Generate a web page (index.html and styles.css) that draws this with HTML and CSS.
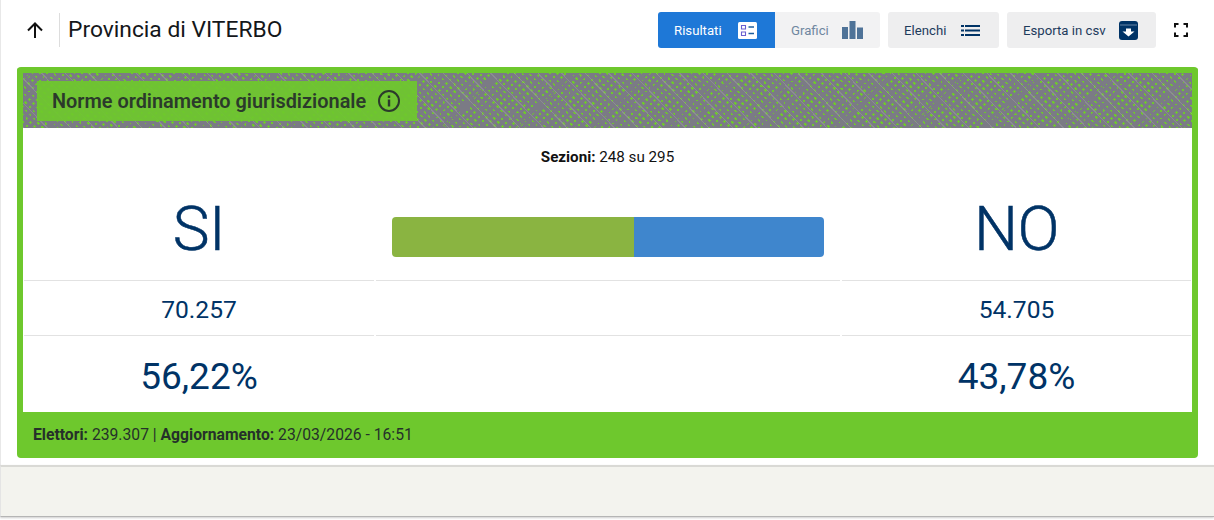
FILE: index.html
```html
<!DOCTYPE html>
<html lang="it">
<head>
<meta charset="utf-8">
<title>Provincia di VITERBO</title>
<link rel="stylesheet" href="styles.css">
</head>
<body>
<main class="panel">
  <header class="topbar">
    <div class="heading">
      <button class="back" aria-label="Indietro">
        <svg width="16" height="16" viewBox="0 0 16 16"><path d="M8 16V1.500M1 8.500l7-7 7 7" fill="none" stroke="#111" stroke-width="2"/></svg>
      </button>
      <h1 class="title">Provincia di VITERBO</h1>
    </div>
    <nav class="actions">
      <div class="group">
        <a class="btn btn-active seg-w1">Risultati
          <svg class="ico" width="19" height="17" viewBox="0 0 19 17"><rect width="19" height="17" rx="1.500" fill="#fff"/><path d="M3.500 3.500h4v3.500h-4zM3.500 10h4v3.500h-4z" fill="none" stroke="#6a5fd0" stroke-width="1.100"/><path d="M10.500 5h5.500M10.500 11.500h5.500" stroke="#1f5f9f" stroke-width="1.600"/></svg>
        </a>
        <a class="btn btn-muted seg-w2">Grafici
          <svg class="ico" width="21" height="18" viewBox="0 0 21 18"><path d="M0 6h6v12H0zM7.500 0h6v18h-6zM15 6.500h6V18h-6z" fill="#4f7398"/></svg>
        </a>
      </div>
      <a class="btn btn-grey seg-w3">Elenchi
        <svg class="ico" width="19" height="11" viewBox="0 0 19 11"><path d="M0 0h3v2H0zM0 4.500h3v2H0zM0 9h3v2H0zM4 0h15v2H4zM4 4.500h15v2H4zM4 9h15v2H4z" fill="#003366"/></svg>
      </a>
      <a class="btn btn-grey seg-w4">Esporta in csv
        <svg class="ico" width="19" height="19" viewBox="0 0 19 19"><path d="M3 0h13a3 3 0 0 1 3 3v13a3 3 0 0 1-3 3H3a3 3 0 0 1-3-3V3a3 3 0 0 1 3-3z" fill="#003366"/><path d="M1 4h17" stroke="#8fa6c0" stroke-width=".7"/><path d="M7 7.500h5v3h3.500l-6 5-6-5H7z" fill="#fff"/></svg>
      </a>
      <button class="full" aria-label="Schermo intero">
        <svg width="14" height="14" viewBox="0 0 14 14"><path d="M1 4.500V1h3.500M9.500 1H13v3.500M13 9.500V13H9.500M4.500 13H1V9.500" fill="none" stroke="#111" stroke-width="2"/></svg>
      </button>
    </nav>
  </header>

  <section class="card">
    <div class="hatch">
      <div class="badge">
        <h2 class="badge-text">Norme ordinamento giurisdizionale</h2>
        <svg width="24" height="24" viewBox="0 0 24 24"><circle cx="12" cy="12" r="10" fill="none" stroke="#2b3a2b" stroke-width="2"/><path d="M10.800 6.500h2.400v2.400h-2.400zM10.800 10.500h2.400v7h-2.400z" fill="#2b3a2b"/></svg>
      </div>
    </div>
    <div class="results">
      <p class="sections"><b>Sezioni:</b> 248 su 295</p>
      <div class="grid">
        <div class="cell big">SI</div>
        <div class="cell bar-cell">
          <div class="bar"><span class="bar-si"></span><span class="bar-no"></span></div>
        </div>
        <div class="cell big">NO</div>
        <div class="cell votes ruled">70.257</div>
        <div class="cell ruled"></div>
        <div class="cell votes ruled">54.705</div>
        <div class="cell pct ruled">56,22%</div>
        <div class="cell ruled"></div>
        <div class="cell pct ruled">43,78%</div>
      </div>
    </div>
    <footer class="card-foot"><b>Elettori:</b> 239.307 | <b>Aggiornamento:</b> 23/03/2026 - 16:51</footer>
  </section>
</main>
<div class="strip"></div>
</body>
</html>
```
FILE: styles.css
```css
* { box-sizing: border-box; }
html, body { margin: 0; padding: 0; }
body {
  width: 1214px;
  height: 520px;
  overflow: hidden;
  background: #fff;
  font-family: Roboto, "Liberation Sans", sans-serif;
  color: #111;
}
.panel {
  height: 465px;
  padding: 0 16px;
  border-left: 1px solid #e8e8e8;
}
.topbar {
  height: 67px;
  display: flex;
  align-items: flex-start;
  justify-content: space-between;
}
.heading {
  display: flex;
  align-items: center;
  height: 34px;
  margin-top: 13px;
}
.back {
  width: 43px;
  height: 34px;
  padding: 0 7px 0 0;
  border: 0;
  border-right: 1px solid #ddd;
  background: none;
  display: flex;
  align-items: center;
  justify-content: center;
}
.title {
  margin: 0 0 0 8px;
  font-size: 22.800px;
  font-weight: 400;
  line-height: 34px;
  color: #14171a;
}
.actions {
  display: flex;
  align-items: center;
  margin-top: 12px;
  margin-right: 10px;
}
.group { display: flex; margin-right: 8px; }
.btn {
  height: 36px;
  display: flex;
  align-items: center;
  justify-content: space-between;
  font-size: 13.200px;
  padding: 0 18px 0 16px;
  border-radius: 3px;
  color: #1d3a5c;
}
.seg-w1 { width: 117px; border-radius: 3px 0 0 3px; }
.seg-w2 { width: 105px; border-radius: 0 3px 3px 0; padding-right: 17px; }
.seg-w3 { width: 111px; margin-right: 8px; padding-right: 19px; }
.seg-w4 { width: 149px; }
.btn-active { background: #1e78d7; color: #fff; }
.btn-muted { background: #f2f2f3; color: #6f87a0; }
.btn-grey { background: #eeeeef; }
.full {
  width: 14px;
  height: 14px;
  margin-left: 18px;
  padding: 0;
  border: 0;
  background: none;
  display: flex;
}
.card {
  width: 1181px;
  height: 391px;
  border: 6px solid #6ec82d;
  border-bottom: 0;
  border-radius: 4px;
  background: #6ec82d;
  display: flex;
  flex-direction: column;
  overflow: hidden;
}
.hatch {
  height: 55px;
  padding: 8px 14px;
  background-color: #6ec82d;
  background-image:
    repeating-linear-gradient(46deg, rgba(150,150,155,.6) 0 1px, transparent 1px 17px),
    repeating-linear-gradient(-44deg, #7b7b85 0 1.600px, transparent 1.600px 13px),
    repeating-linear-gradient(46deg, #7b7b85 0 3.300px, transparent 3.300px 5.100px),
    repeating-linear-gradient(-44deg, #7b7b85 0 3.400px, transparent 3.400px 5.800px);
}
.badge {
  width: 380px;
  height: 40px;
  display: flex;
  align-items: center;
  padding-left: 15px;
  gap: 11px;
  background: rgba(110, 200, 45, .92);
  color: #2b3a2b;
}
.badge-text {
  margin: 0;
  font-size: 19.900px;
  font-weight: 600;
  white-space: nowrap;
}
.results {
  height: 284px;
  background: #fff;
  padding: 0 1px;
}
.sections {
  margin: 0;
  height: 58px;
  padding-top: 20px;
  text-align: center;
  font-size: 15.200px;
  line-height: 18px;
  color: #111;
}
.sections b { font-weight: 700; }
.grid {
  display: grid;
  grid-template-columns: 350px 464px 349px;
  grid-template-rows: 94px 55px 77px;
  column-gap: 2px;
}
.cell {
  display: flex;
  align-items: center;
  justify-content: center;
  color: #003366;
}
.ruled { border-top: 1px solid #e2e2e2; }
.big { font-size: 62px; font-weight: 300; padding-bottom: 9px; letter-spacing: -.5px; -webkit-text-stroke: .5px #003366; }
.bar-cell { align-items: flex-start; padding-top: 31px; }
.bar {
  width: 432px;
  height: 40px;
  display: flex;
  border-radius: 4px;
  overflow: hidden;
}
.bar-si { width: 56%; background: #8ab441; }
.bar-no { flex: 1; background: #3f86cd; }
.votes { font-size: 24.600px; padding-top: 2px; }
.pct { font-size: 37px; padding-top: 5px; }
.card-foot {
  height: 46px;
  padding-left: 10px;
  font-size: 15.700px;
  line-height: 46px;
  color: #25302a;
  background: #6ec82d;
  white-space: nowrap;
}
.card-foot b { font-weight: 700; }
.strip {
  height: 52px;
  background: #f3f3ee;
  border-top: 2px solid #d9d9d5;
  border-left: 1px solid #e4e4e4;
  border-bottom: 1px solid #b5b5b5;
  box-shadow: 0 1px 2px rgba(0, 0, 0, .2);
}
```
